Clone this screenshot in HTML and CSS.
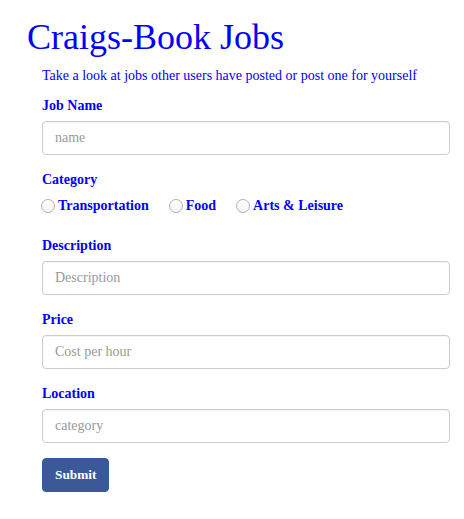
FILE: index.html
```html
<!DOCTYPE html>
<html>
<head>
<meta charset="utf-8">
<link rel="stylesheet" href="styles.css">
</head>
<body>
<h1 class="title">Craigs-Book Jobs</h1>
<div class="content">
  <p class="intro">Take a look at jobs other users have posted or post one for yourself</p>
  <form class="job-form">
    <div class="group">
      <label class="label">Job Name</label>
      <input class="field" type="text" placeholder="name">
    </div>
    <div class="group group-radios">
      <label class="label">Category</label>
      <div class="radios">
        <label class="radio"><input type="radio" name="cat"><span>Transportation</span></label>
        <label class="radio"><input type="radio" name="cat"><span>Food</span></label>
        <label class="radio"><input type="radio" name="cat"><span>Arts &amp; Leisure</span></label>
      </div>
    </div>
    <div class="group">
      <label class="label">Description</label>
      <input class="field" type="text" placeholder="Description">
    </div>
    <div class="group">
      <label class="label">Price</label>
      <input class="field" type="text" placeholder="Cost per hour">
    </div>
    <div class="group">
      <label class="label">Location</label>
      <input class="field" type="text" placeholder="category">
    </div>
    <button class="submit" type="button">Submit</button>
  </form>
  <h2 class="jobs-heading">Jobs</h2>
</div>
</body>
</html>
```
FILE: styles.css
```css
* { box-sizing: border-box; }
html, body { margin: 0; padding: 0; background: #fff; }
body {
  font-family: "Liberation Serif", "Times New Roman", serif;
  font-size: 14px;
  line-height: 20px;
  color: #0000ff;
}
.title {
  margin: 17px 0 0 27px;
  font-size: 36px;
  line-height: 40px;
  font-weight: normal;
  color: #0000ff;
}
.content {
  padding: 0 14px 0 42px;
}
.intro {
  margin: 9px 0 10px 0;
  line-height: 20px;
}
.job-form {
  display: flex;
  flex-direction: column;
}
.group {
  display: flex;
  flex-direction: column;
  margin-bottom: 15px;
}
.label {
  font-weight: bold;
  line-height: 20px;
  margin-bottom: 5px;
}
.field {
  height: 34px;
  width: 100%;
  padding: 6px 12px;
  border: 1px solid #cccccc;
  border-radius: 4px;
  font-family: "Liberation Serif", "Times New Roman", serif;
  font-size: 14px;
  color: #555;
  background: #fff;
  box-shadow: inset 0 1px 1px rgba(0,0,0,0.04);
}
.field::placeholder { color: #999999; }
.group-radios { margin-bottom: 20px; }
.group-radios .label { margin-bottom: 6px; }
.radios {
  display: flex;
  gap: 21px;
  align-items: center;
  height: 20px;
}
.radio {
  display: flex;
  align-items: center;
  gap: 3px;
  font-weight: bold;
  margin-left: -1px;
}
.radio input {
  appearance: none;
  -webkit-appearance: none;
  margin: 0;
  width: 14px;
  height: 14px;
  border: 1px solid #b0b0b0;
  border-radius: 50%;
  background: linear-gradient(#ffffff, #f4f4f4);
}
.submit {
  align-self: flex-start;
  height: 34px;
  padding: 6px 12px;
  background: #3b5998;
  border: 1px solid #2e5c9e;
  border-radius: 4px;
  color: #ffffff;
  font-family: "Liberation Serif", "Times New Roman", serif;
  font-size: 13.333px;
  font-weight: bold;
  line-height: 20px;
}
.jobs-heading {
  margin: 24px 0 0 3px;
  font-size: 30px;
  line-height: 33px;
  font-weight: normal;
}
```
